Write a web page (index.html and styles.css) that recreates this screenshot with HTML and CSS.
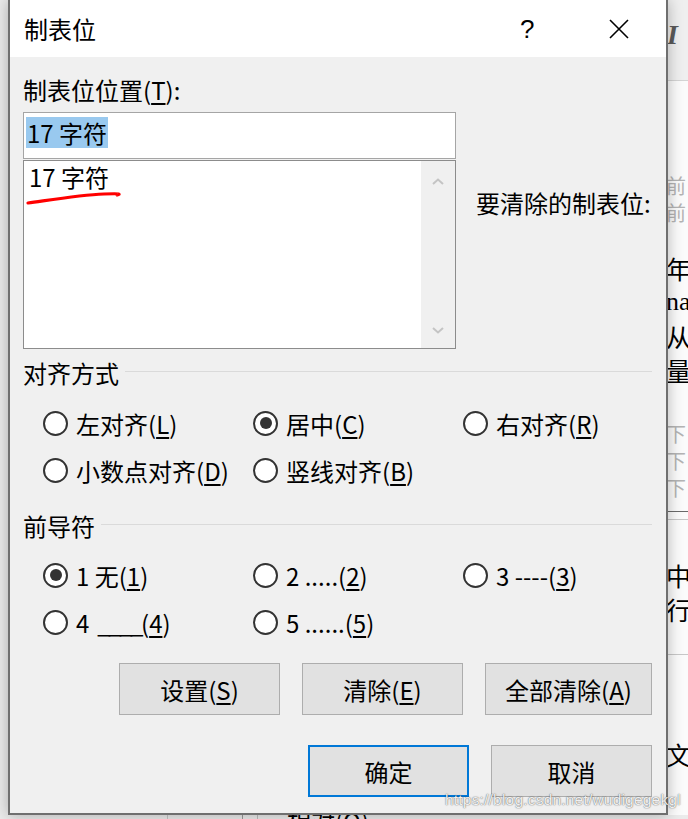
FILE: index.html
```html
<!DOCTYPE html>
<html lang="zh-CN">
<head>
  <meta charset="UTF-8" />
  <title>制表位</title>
  <link rel="stylesheet" href="styles.css">
</head>
<body>
  <div class="screen">
    <div class="dialog">
      <div class="titlebar">
        <span class="title">制表位</span>
        <span class="help">?</span>
        <svg class="close" viewBox="0 0 20 20" xmlns="http://www.w3.org/2000/svg">
          <path d="M1 1L19 19M19 1L1 19" stroke="#000" stroke-width="1.6" fill="none"/>
        </svg>
      </div>

      <div class="content">
        <div class="top">
          <div class="col-left">
            <div class="label">制表位位置(<u>T</u>):</div>
            <div class="input"><span class="sel">17 字符</span></div>
            <div class="list">
              <div class="items">
                <div class="item">17 字符</div>
              </div>
              <div class="scroll">
                <svg class="chev" viewBox="0 0 12 7" xmlns="http://www.w3.org/2000/svg"><path d="M1 6L6 1.5L11 6" /></svg>
                <svg class="chev" viewBox="0 0 12 7" xmlns="http://www.w3.org/2000/svg"><path d="M1 1L6 5.5L11 1" /></svg>
              </div>
              <!-- hand-drawn red mark over the entry -->
              <svg class="mark" viewBox="0 0 100 24" xmlns="http://www.w3.org/2000/svg">
                <path d="M4 17C26 14 56 9 80 8S92 9 93 9" />
              </svg>
            </div>
          </div>
          <div class="col-right">
            <div class="label">要清除的制表位:</div>
          </div>
        </div>

        <div class="group-head"><span>对齐方式</span><i class="rule"></i></div>
        <div class="options">
          <div class="opt"><span class="radio"></span>左对齐(<u>L</u>)</div>
          <div class="opt"><span class="radio on"></span>居中(<u>C</u>)</div>
          <div class="opt"><span class="radio"></span>右对齐(<u>R</u>)</div>
          <div class="opt"><span class="radio"></span>小数点对齐(<u>D</u>)</div>
          <div class="opt"><span class="radio"></span>竖线对齐(<u>B</u>)</div>
        </div>

        <div class="group-head next"><span>前导符</span><i class="rule"></i></div>
        <div class="options">
          <div class="opt"><span class="radio on"></span>1 无(<u>1</u>)</div>
          <div class="opt"><span class="radio"></span>2 .....(<u>2</u>)</div>
          <div class="opt"><span class="radio"></span>3 ----(<u>3</u>)</div>
          <div class="opt"><span class="radio"></span>4<span class="tight">____</span>(<u>4</u>)</div>
          <div class="opt"><span class="radio"></span>5 ......(<u>5</u>)</div>
        </div>

        <div class="buttons">
          <div class="btn">设置(<u>S</u>)</div>
          <div class="btn">清除(<u>E</u>)</div>
          <div class="btn wide">全部清除(<u>A</u>)</div>
        </div>
        <div class="buttons final">
          <div class="btn default">确定</div>
          <div class="btn">取消</div>
        </div>
      </div>
    </div>

    <!-- document window behind the dialog -->
    <div class="backdrop">
      <div class="ribbon"><span class="italic">I</span></div>
      <div class="doc">
        <div class="ln pre first">前</div>
        <div class="ln pre">前</div>
        <div class="ln txt gap1">年</div>
        <div class="ln txt latin">na</div>
        <div class="ln txt">从</div>
        <div class="ln txt">量</div>
        <div class="ln pre gap2">下</div>
        <div class="ln pre">下</div>
        <div class="ln pre">下</div>
        <div class="hr dark"></div>
        <div class="hr light"></div>
        <div class="ln txt gap3">中</div>
        <div class="ln txt">行</div>
        <div class="hr light gap4"></div>
        <div class="ln txt gap5">文</div>
      </div>
    </div>

    <div class="watermark">https://blog.csdn.net/wudigegekgl</div>
  </div>

  <div class="under">
    <i class="vl a"></i><i class="vl b"></i><i class="vl c"></i>
    <span class="peek">相对(O)</span>
  </div>
</body>
</html>
```

FILE: styles.css
```css
* {
  box-sizing: border-box;
}

html, body {
  margin: 0;
  padding: 0;
  height: 100%;
  overflow: hidden;
  background: #ebebeb;
  color: #000;
  font-family: "Noto Sans CJK SC", "Noto Sans", sans-serif;
}

.screen {
  position: relative;
  display: flex;
  height: 815px;
}

/* Dialog window */
.dialog {
  position: relative;
  z-index: 1;
  width: 660px;
  height: 815px;
  margin-left: 8px;
  background: #f0f0f0;
  border: 2px solid #6f6f6f;
  border-top: 0;
  box-shadow: 0 0 14px rgba(0,0,0,0.28);
}

.titlebar {
  height: 57px;
  background: #fff;
  display: flex;
  align-items: center;
  padding-left: 14px;
}
.title {
  flex: 1;
  font-size: 24px;
  line-height: 32px;
}
.help {
  width: 14px;
  margin-right: 75px;
  font-family: "Liberation Sans", sans-serif;
  font-size: 26px;
  line-height: 32px;
}
.close {
  width: 20px;
  height: 20px;
  margin-right: 37px;
}

.content {
  padding: 17px 14px 0 13px;
  font-size: 24px;
}

u {
  text-decoration-thickness: 1.5px;
  text-underline-offset: 3px;
}

.label {
  line-height: 32px;
  white-space: nowrap;
}

/* Tab position input + list */
.top {
  display: flex;
}
.col-left {
  width: 433px;
}
.col-right {
  margin-left: 20px;
  padding-top: 113px;
}

.input {
  margin-top: 6px;
  height: 47px;
  background: #fff;
  border: 1px solid #a5a5a5;
  padding: 2px 0 0 2px;
}
.sel {
  display: inline-block;
  background: #99c9ef;
  line-height: 31px;
  padding: 0 1px;
}

.list {
  position: relative;
  display: flex;
  margin-top: 1px;
  height: 189px;
  background: #fff;
  border: 1px solid #8c8c8c;
}
.items {
  flex: 1;
  padding: 1px 0 0 5px;
}
.item {
  line-height: 30px;
}
.scroll {
  width: 34px;
  background: #f0f0f0;
  display: flex;
  flex-direction: column;
  justify-content: space-between;
  align-items: center;
  padding: 17px 0 14px;
}
.chev {
  width: 12px;
  height: 7px;
}
.chev path {
  fill: none;
  stroke: #c4c4c4;
  stroke-width: 2;
}
.mark {
  position: absolute;
  left: 0;
  top: 25px;
  width: 100px;
  height: 24px;
}
.mark path {
  fill: none;
  stroke: #f00;
  stroke-width: 3.2;
  stroke-linecap: round;
}

/* Group headings with rule */
.group-head {
  display: flex;
  align-items: center;
  margin-top: 8px;
  line-height: 32px;
}
.group-head.next {
  margin-top: 20px;
}
.rule {
  flex: 1;
  height: 1px;
  margin: 0 0 4px 6px;
  background: #dadada;
}

.options {
  display: grid;
  grid-template-columns: repeat(3, 210px);
  row-gap: 7px;
  margin-top: 14px;
  padding-left: 20px;
}
.group-head.next + .options {
  margin-top: 13px;
}
.opt {
  display: flex;
  align-items: center;
  height: 40px;
  white-space: nowrap;
}
.tight {
  margin: 0 0 0 8px;
  letter-spacing: -2.5px;
}
.radio {
  flex: none;
  width: 25px;
  height: 25px;
  margin-right: 8px;
  border: 2px solid #333;
  border-radius: 50%;
  background: #fff;
  display: flex;
  align-items: center;
  justify-content: center;
}
.radio.on::after {
  content: "";
  width: 12px;
  height: 12px;
  border-radius: 50%;
  background: #333;
}

/* Buttons */
.buttons {
  display: flex;
  justify-content: flex-end;
  gap: 22px;
  margin-top: 21px;
}
.buttons.final {
  margin-top: 30px;
}
.btn {
  width: 161px;
  height: 52px;
  background: #e1e1e1;
  border: 1px solid #adadad;
  display: flex;
  align-items: center;
  justify-content: center;
  white-space: nowrap;
}
.btn.wide {
  width: 167px;
}
.btn.default {
  border: 2px solid #0078d7;
}

/* Watermark */
.watermark {
  position: absolute;
  z-index: 2;
  left: 445px;
  top: 791px;
  font-family: "Liberation Sans", sans-serif;
  font-size: 15.5px;
  letter-spacing: 0.2px;
  color: rgba(255,255,255,0.92);
  text-shadow: 0 0 1px rgba(0,0,0,0.6), 0 0 2px rgba(0,0,0,0.3);
  white-space: nowrap;
}

/* Document window behind */
.backdrop {
  width: 20px;
  overflow: hidden;
  background: #fbfbfb;
  white-space: nowrap;
}
.ribbon {
  height: 81px;
  background: #efefef;
  border-bottom: 1px solid #d4d4d4;
  padding-top: 20px;
}
.italic {
  display: block;
  margin-left: -1px;
  font-family: "Liberation Serif", serif;
  font-weight: bold;
  font-style: italic;
  font-size: 28px;
  line-height: 30px;
  color: #5a5a5a;
}
.doc {
  margin-left: -2px;
}
.ln {
  height: 27px;
  line-height: 27px;
}
.ln.pre {
  font-size: 20px;
  color: #b4b4b4;
}
.ln.txt {
  height: 34px;
  line-height: 34px;
  font-size: 25px;
}
.ln.latin {
  font-family: "Liberation Serif", serif;
  font-size: 26px;
}
.first { margin-top: 91px; }
.gap1 { margin-top: 25px; }
.gap2 { margin-top: 33px; }
.gap3 { margin-top: 31px; }
.gap4 { margin-top: 28px; }
.gap5 { margin-top: 75px; }
.hr {
  height: 8px;
}
.hr.dark {
  margin-top: 10px;
  border-top: 1px solid #6a6a6a;
}
.hr.light {
  border-top: 1px solid #c8c8c8;
}

/* Strip under the dialog */
.under {
  position: relative;
  height: 4px;
  overflow: hidden;
}
.vl {
  position: absolute;
  top: 0;
  width: 1px;
  height: 4px;
}
.vl.a { left: 167px; background: #c6c6c6; }
.vl.b { left: 242px; background: #9a9a9a; }
.vl.c { left: 257px; background: #bdbdbd; }
.peek {
  position: absolute;
  left: 287px;
  top: -6px;
  font-size: 24px;
  line-height: 24px;
}
```
